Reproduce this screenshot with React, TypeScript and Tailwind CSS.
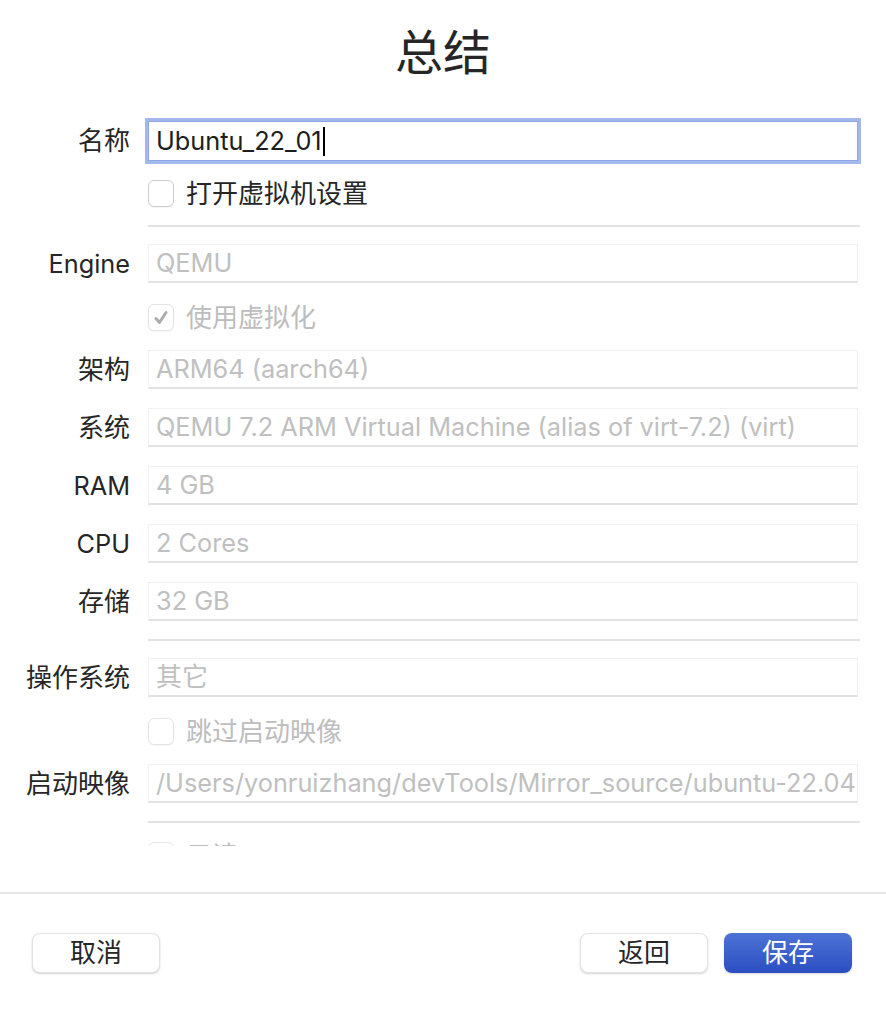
import React from 'react';

const FONT = "font-['Inter','Noto_Sans_CJK_SC',sans-serif]";

// CJK text sits a touch wider than the Latin in the reference
const size = (s?: string) => (s && /[\u4e00-\u9fff]/.test(s) ? 'text-[26px]' : 'text-[25.3px]');

function Checkbox({ checked = false, disabled = false }: { checked?: boolean; disabled?: boolean }) {
  return (
    <div
      className={`w-[26px] h-[27px] rounded-[6px] bg-white border flex items-center justify-center shadow-[0_1px_1px_rgba(0,0,0,0.04)] ${
        disabled ? 'border-[#e4e4e4]' : 'border-[#cdcdcd]'
      }`}
    >
      {checked && (
        <svg width="18" height="18" viewBox="0 0 18 18" fill="none">
          <path d="M4 9.5 L7.5 13.5 L14 3.5" stroke="#adadad" strokeWidth="3" strokeLinecap="round" strokeLinejoin="round" />
        </svg>
      )}
    </div>
  );
}

function Row({ label, children, className = '' }: { label?: string; children: React.ReactNode; className?: string }) {
  return (
    <div className={`flex items-center ${className}`}>
      <div className={`w-[130px] shrink-0 text-right ${size(label)} text-[#262626] leading-none whitespace-nowrap`}>{label}</div>
      <div className="ml-[18px] w-[710px]">{children}</div>
    </div>
  );
}

function Field({ value }: { value: string }) {
  return (
    <div className="h-[39px] bg-white border border-[#f1f1f1] border-b-[#e2e2e2] border-b-2 flex items-center pl-[7px] overflow-hidden">
      <span className={`${size(value)} text-[#c0c0c0] leading-none whitespace-nowrap`}>{value}</span>
    </div>
  );
}

function CheckRow({ label, checked, disabled, className = '' }: { label: string; checked?: boolean; disabled?: boolean; className?: string }) {
  return (
    <Row className={className}>
      <div className="flex items-center gap-[12px]">
        <Checkbox checked={checked} disabled={disabled} />
        <span className={`text-[26px] leading-none ${disabled ? 'text-[#bdbdbd]' : 'text-[#262626]'}`}>{label}</span>
      </div>
    </Row>
  );
}

function Divider({ className = '' }: { className?: string }) {
  return (
    <div className={`flex ${className}`}>
      <div className="ml-[148px] w-[712px] h-[2px] bg-[#e3e3e3]" />
    </div>
  );
}

export default function App() {
  return (
    <div className={`w-[886px] h-[1010px] bg-white overflow-hidden ${FONT}`}>
      {/* Title */}
      <div className="h-[106px] flex items-center justify-center">
        <h1 className="text-[48px] leading-none font-normal text-[#262626]">总结</h1>
      </div>

      <div className="h-[740px] overflow-hidden">
        <Row label="名称" className="mt-[15px]">
          <div className="h-[40px] bg-white border border-[#8fa8e4] ring-[3px] ring-[#a3b9ee] flex items-center pl-[7px]">
            <span className="text-[25.3px] text-[#1e1e1e] leading-none">Ubuntu_22_01</span>
            <span className="ml-[1px] w-[2px] h-[29px] bg-black" />
          </div>
        </Row>
        <CheckRow label="打开虚拟机设置" className="mt-[19px]" />
        <Divider className="mt-[18px]" />

        <Row label="Engine" className="mt-[17px]">
          <Field value="QEMU" />
        </Row>
        <CheckRow label="使用虚拟化" checked disabled className="mt-[21px]" />
        <Row label="架构" className="mt-[19px]">
          <Field value="ARM64 (aarch64)" />
        </Row>
        <Row label="系统" className="mt-[19px]">
          <Field value="QEMU 7.2 ARM Virtual Machine (alias of virt-7.2) (virt)" />
        </Row>
        <Row label="RAM" className="mt-[19px]">
          <Field value="4 GB" />
        </Row>
        <Row label="CPU" className="mt-[19px]">
          <Field value="2 Cores" />
        </Row>
        <Row label="存储" className="mt-[19px]">
          <Field value="32 GB" />
        </Row>
        <Divider className="mt-[18px]" />

        <Row label="操作系统" className="mt-[17px]">
          <Field value="其它" />
        </Row>
        <CheckRow label="跳过启动映像" disabled className="mt-[21px]" />
        <Row label="启动映像" className="mt-[19px]">
          <Field value="/Users/yonruizhang/devTools/Mirror_source/ubuntu-22.04" />
        </Row>
        <Divider className="mt-[18px]" />
        <CheckRow label="只读" disabled className="mt-[19px]" />
      </div>

      {/* Footer */}
      <div className="mt-[46px] h-[2px] bg-[#e6e6e6]" />
      <div className="mt-[39px] px-[32px] flex items-center">
        <button className="w-[128px] h-[40px] rounded-[8px] bg-white border border-[#e2e2e2] shadow-[0_1px_2px_rgba(0,0,0,0.18)] text-[26px] text-[#262626] leading-none">
          取消
        </button>
        <div className="flex-1" />
        <button className="w-[128px] h-[40px] rounded-[8px] bg-white border border-[#e2e2e2] shadow-[0_1px_2px_rgba(0,0,0,0.18)] text-[26px] text-[#262626] leading-none">
          返回
        </button>
        <button className="ml-[16px] w-[128px] h-[40px] rounded-[8px] bg-gradient-to-b from-[#4d73d6] to-[#2b4ec1] shadow-[0_1px_2px_rgba(0,0,0,0.15)] text-[26px] text-white leading-none">
          保存
        </button>
        <div className="w-[2px]" />
      </div>
    </div>
  );
}
